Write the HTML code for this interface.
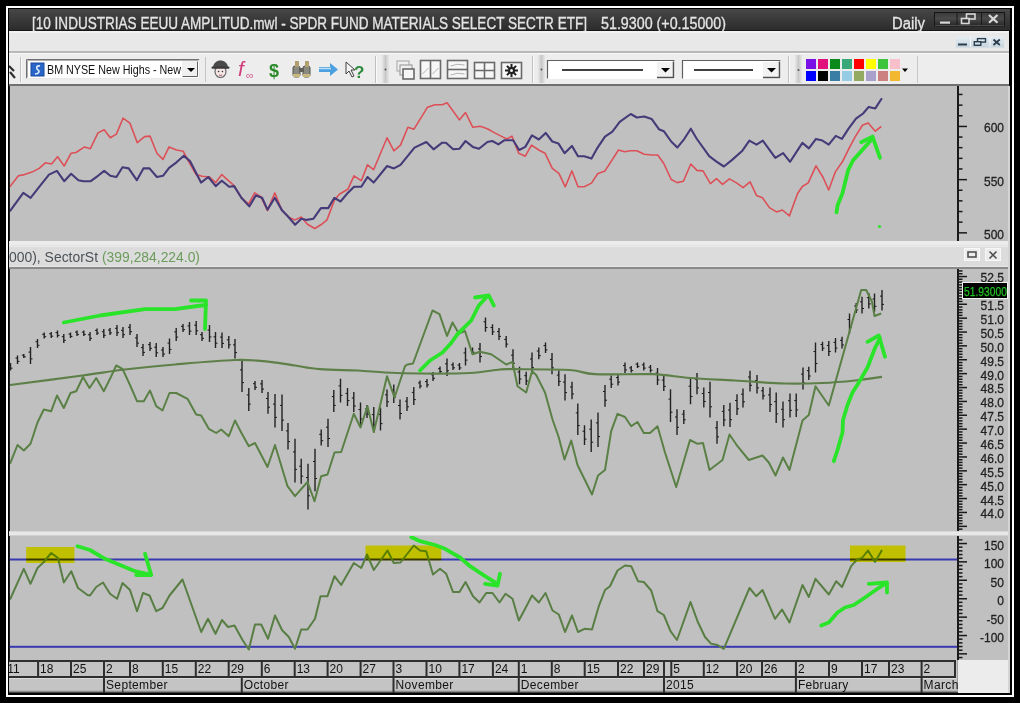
<!DOCTYPE html><html><head><meta charset="utf-8"><style>html,body{margin:0;padding:0;background:#000;width:1020px;height:703px;overflow:hidden}svg{display:block;will-change:transform}text{font-family:"Liberation Sans", sans-serif}</style></head><body>
<svg width="1020" height="703" viewBox="0 0 1020 703">
<defs><linearGradient id="tb" x1="0" y1="0" x2="0" y2="1"><stop offset="0" stop-color="#474747"/><stop offset="1" stop-color="#2c2c2c"/></linearGradient><linearGradient id="wb" x1="0" y1="0" x2="0" y2="1"><stop offset="0" stop-color="#3a3a3a"/><stop offset="0.45" stop-color="#4a4a4a"/><stop offset="1" stop-color="#262626"/></linearGradient><linearGradient id="grip" x1="0" y1="0" x2="1" y2="0"><stop offset="0" stop-color="#f0f0f0"/><stop offset="0.5" stop-color="#c8c8c8"/><stop offset="1" stop-color="#f0f0f0"/></linearGradient><clipPath id="cpd"><rect x="9" y="600" width="1000" height="100"/></clipPath><clipPath id="cp"><rect x="10" y="86" width="947" height="155"/><rect x="10" y="269" width="947" height="262"/><rect x="10" y="536" width="947" height="124"/></clipPath></defs>
<rect x="0" y="0" width="1020" height="703" fill="#000"/>
<rect x="6" y="6" width="1008" height="691" fill="#fff"/>
<rect x="8" y="8" width="1004" height="687" fill="#000"/>
<rect x="9" y="9" width="1001" height="21" fill="url(#tb)"/>
<rect x="9" y="30" width="1001" height="1" fill="#161616"/>
<text x="32" y="28.5" font-size="16" fill="#e4e4e4" stroke="#e4e4e4" stroke-width="0.3" textLength="555" lengthAdjust="spacingAndGlyphs">[10 INDUSTRIAS EEUU AMPLITUD.mwl - SPDR FUND MATERIALS SELECT SECTR ETF]</text>
<text x="601" y="28.5" font-size="16" fill="#e4e4e4" stroke="#e4e4e4" stroke-width="0.3" textLength="125" lengthAdjust="spacingAndGlyphs">51.9300 (+0.15000)</text>
<text x="892" y="29" font-size="16" fill="#e4e4e4" stroke="#e4e4e4" stroke-width="0.3" textLength="33" lengthAdjust="spacingAndGlyphs">Daily</text>
<rect x="934.5" y="12.5" width="70" height="13.5" fill="url(#wb)" stroke="#161616" stroke-width="1"/>
<rect x="935" y="25" width="69" height="1" fill="#4a4a4a"/>
<rect x="956.5" y="13" width="1" height="12" fill="#1a1a1a"/><rect x="981" y="13" width="1" height="12" fill="#1a1a1a"/>
<rect x="940" y="21.5" width="10" height="2.2" fill="#d8d8d8"/>
<rect x="966.5" y="14" width="8.5" height="5" fill="none" stroke="#d8d8d8" stroke-width="1.6"/><rect x="961.5" y="18.5" width="7.5" height="5" fill="#333" stroke="#d8d8d8" stroke-width="1.6"/>
<path d="M989 15 L997.5 22.8 M997.5 15 L989 22.8" stroke="#d8d8d8" stroke-width="2.2"/>
<rect x="9" y="31" width="1000" height="20" fill="#e8e8e8"/>
<rect x="9" y="31" width="1000" height="2" fill="#f2f2f2"/>
<linearGradient id="mdi" x1="0" y1="0" x2="0" y2="1"><stop offset="0" stop-color="#e6eef4"/><stop offset="1" stop-color="#c6d4de"/></linearGradient>
<rect x="956" y="36.5" width="48" height="11" fill="url(#mdi)"/>
<rect x="970" y="37" width="1" height="10" fill="#f4f8fb"/><rect x="989.5" y="37" width="1" height="10" fill="#f4f8fb"/>
<rect x="958" y="43.5" width="9" height="2" fill="#2a3e4e"/>
<rect x="977.5" y="38.6" width="8" height="3.5" fill="none" stroke="#2a3e4e" stroke-width="1.4"/><rect x="974.3" y="41.7" width="6.5" height="3.6" fill="#d2dee6" stroke="#2a3e4e" stroke-width="1.4"/>
<path d="M993.5 39.5 L999.8 45 M999.8 39.5 L993.5 45" stroke="#2a3e4e" stroke-width="1.8"/>
<rect x="9" y="51" width="1000" height="2" fill="#b8b8b8"/>
<rect x="9" y="53" width="1000" height="31" fill="#ededed"/>
<rect x="9" y="53" width="1000" height="1" fill="#f8f8f8"/>
<rect x="9" y="84" width="1000" height="2" fill="#707070"/>
<path d="M9 66 L14 71 M10 72 L15 78" stroke="#303030" stroke-width="2.2" fill="none"/>
<rect x="20" y="57" width="1" height="25" fill="#c0c0c0"/><rect x="21" y="57" width="1" height="25" fill="#fafafa"/>
<rect x="26" y="59" width="174" height="20" fill="#fff"/>
<path d="M26.5 78.5 V59.5 H199.5" stroke="#707070" fill="none"/>
<path d="M27.5 77.5 V60.5 H198.5" stroke="#b0b0b0" fill="none"/>
<path d="M199.5 59.5 V78.5 H26.5" stroke="#e8e8e8" fill="none"/>
<rect x="31" y="63" width="13" height="13" fill="#2a66c8"/><rect x="31" y="63" width="13" height="13" fill="none" stroke="#174a9a" stroke-width="1"/>
<path d="M40 66 C36 65 36 69 38 70 C40 71 39 74 35 74" stroke="#dff0ff" stroke-width="1.6" fill="none"/>
<text x="47" y="74" font-size="12.5" fill="#111" textLength="134" lengthAdjust="spacingAndGlyphs">BM NYSE New Highs - New</text>
<rect x="182" y="61" width="16" height="16" fill="#f0f0f0"/><path d="M182.5 76.5 H197.5 V61.5" stroke="#606060" fill="none"/>
<path d="M187 68 H195 L191 72 Z" fill="#000"/>
<rect x="205" y="57" width="1" height="25" fill="#c4c4c4"/>
<ellipse cx="220.5" cy="71.5" rx="5.5" ry="6" fill="#f4e4e4" stroke="#6a6a6a" stroke-width="1.2"/>
<path d="M213 68 C213 58 228 58 228 68 Z" fill="#4a4a4a"/><rect x="211.5" y="66.5" width="18" height="2.2" rx="1" fill="#3a3a3a"/>
<circle cx="218.6" cy="71.5" r="0.8" fill="#333"/><circle cx="222.4" cy="71.5" r="0.8" fill="#333"/><path d="M219 75 Q220.5 76 222 75" stroke="#904848" fill="none" stroke-width="0.9"/>
<text x="238" y="76" font-size="21" font-style="italic" font-family="Liberation Serif, serif" fill="#d03c7c">f</text>
<text x="246" y="79" font-size="11" fill="#d86090">&#8734;</text>
<text x="269" y="77" font-size="18" font-weight="bold" fill="#2a8a2a">$</text>
<rect x="293" y="66" width="7" height="11" rx="2" fill="#8a8a80" stroke="#505048" stroke-width="1"/><rect x="303" y="66" width="7" height="11" rx="2" fill="#8a8a80" stroke="#505048" stroke-width="1"/><rect x="295" y="61" width="4" height="6" fill="#b0a070"/><rect x="305" y="61" width="4" height="6" fill="#b0a070"/><rect x="299" y="68" width="5" height="4" fill="#606058"/><rect x="293" y="74" width="7" height="3" fill="#c8b880"/><rect x="303" y="74" width="7" height="3" fill="#c8b880"/>
<path d="M319 67 H330 V63 L338 69.5 L330 76 V72 H319 Z" fill="#4aa0e0"/><path d="M319 68.5 H331" stroke="#bfe0f8" stroke-width="1.5"/>
<path d="M346 62 L346 74 L349 71 L352 77 L354 76 L351 70 L355 70 Z" fill="#f4f4f4" stroke="#404040" stroke-width="1"/>
<text x="354" y="78" font-size="17" font-weight="bold" fill="#2a8a3a">?</text>
<rect x="375" y="56" width="1" height="27" fill="#c0c0c0"/><rect x="376" y="56" width="1" height="27" fill="#fafafa"/>
<rect x="381" y="55" width="9" height="28" fill="url(#grip)"/><circle cx="385.5" cy="69.5" r="1" fill="#505050"/>
<rect x="397" y="61" width="12" height="10" fill="#f0f0f0" stroke="#b0b0b0" stroke-width="1.2"/><rect x="400" y="65" width="12" height="10" fill="#f0f0f0" stroke="#a0a0a0" stroke-width="1.2"/><rect x="403" y="69" width="11" height="10" fill="#f6f6f6" stroke="#6a6a6a" stroke-width="1.6"/>
<rect x="420.5" y="60.5" width="20" height="18" fill="#f6f6f6" stroke="#6a6a6a" stroke-width="1.6"/><path d="M430.5 60.5 V78.5" stroke="#6a6a6a" stroke-width="1.6"/><path d="M422.5 74 L428.5 68 M432.5 74 L438.5 68" stroke="#a0a0a0" stroke-width="0.8"/>
<rect x="447.5" y="60.5" width="20" height="18" fill="#f6f6f6" stroke="#6a6a6a" stroke-width="1.6"/><path d="M447.5 69.5 H467.5" stroke="#6a6a6a" stroke-width="1.6"/><path d="M450.5 66 Q457.5 63 464.5 65 M450.5 75 Q457.5 72 464.5 74" stroke="#a0a0a0" stroke-width="0.8" fill="none"/>
<rect x="474.5" y="62.5" width="20" height="16" fill="#f6f6f6" stroke="#6a6a6a" stroke-width="1.6"/><path d="M484.5 62.5 V78.5 M474.5 70.5 H494.5" stroke="#6a6a6a" stroke-width="1.6"/>
<rect x="501.5" y="62.5" width="20" height="16" fill="#f6f6f6" stroke="#6a6a6a" stroke-width="1.6"/>
<g transform="translate(511.5,70.5)"><circle r="3.5" fill="#202020"/><rect x="-1" y="-6.5" width="2" height="4" fill="#202020" transform="rotate(0)"/><rect x="-1" y="-6.5" width="2" height="4" fill="#202020" transform="rotate(45)"/><rect x="-1" y="-6.5" width="2" height="4" fill="#202020" transform="rotate(90)"/><rect x="-1" y="-6.5" width="2" height="4" fill="#202020" transform="rotate(135)"/><rect x="-1" y="-6.5" width="2" height="4" fill="#202020" transform="rotate(180)"/><rect x="-1" y="-6.5" width="2" height="4" fill="#202020" transform="rotate(225)"/><rect x="-1" y="-6.5" width="2" height="4" fill="#202020" transform="rotate(270)"/><rect x="-1" y="-6.5" width="2" height="4" fill="#202020" transform="rotate(315)"/><circle r="1.5" fill="#f0f0f0"/></g>
<rect x="532" y="56" width="1" height="27" fill="#c0c0c0"/><rect x="533" y="56" width="1" height="27" fill="#fafafa"/>
<rect x="537" y="55" width="9" height="28" fill="url(#grip)"/><circle cx="541.5" cy="69.5" r="1" fill="#505050"/>
<rect x="547" y="60" width="128" height="19" fill="#fff"/><path d="M547.5 78.5 V60.5 H674.5" stroke="#606060" fill="none" stroke-width="1.2"/><rect x="657" y="62" width="17" height="15" fill="#f2f2f2"/><path d="M657.0 77.5 H673.5 V61.5" stroke="#505050" fill="none" stroke-width="1.5"/><path d="M661.0 68 H670.0 L665.5 72.5 Z" fill="#000"/><rect x="562" y="69" width="81" height="2" fill="#404040"/>
<rect x="682" y="60" width="99" height="19" fill="#fff"/><path d="M682.5 78.5 V60.5 H780.5" stroke="#606060" fill="none" stroke-width="1.2"/><rect x="763" y="62" width="17" height="15" fill="#f2f2f2"/><path d="M763.0 77.5 H779.5 V61.5" stroke="#505050" fill="none" stroke-width="1.5"/><path d="M767.0 68 H776.0 L771.5 72.5 Z" fill="#000"/><rect x="694" y="69" width="59" height="2" fill="#404040"/>
<rect x="788" y="56" width="1" height="27" fill="#c0c0c0"/><rect x="789" y="56" width="1" height="27" fill="#fafafa"/>
<rect x="794" y="55" width="9" height="28" fill="url(#grip)"/><circle cx="798.5" cy="70" r="1" fill="#505050"/>
<rect x="806" y="59" width="10" height="10" fill="#7a10e8"/>
<rect x="806" y="71" width="10" height="10" fill="#0000ff"/>
<rect x="818" y="59" width="10" height="10" fill="#e0107c"/>
<rect x="818" y="71" width="10" height="10" fill="#000000"/>
<rect x="830" y="59" width="10" height="10" fill="#0a8a1a"/>
<rect x="830" y="71" width="10" height="10" fill="#3a7ea6"/>
<rect x="842" y="59" width="10" height="10" fill="#38a878"/>
<rect x="842" y="71" width="10" height="10" fill="#96cce4"/>
<rect x="854" y="59" width="10" height="10" fill="#ff0000"/>
<rect x="854" y="71" width="10" height="10" fill="#92aa62"/>
<rect x="866" y="59" width="10" height="10" fill="#ffff00"/>
<rect x="866" y="71" width="10" height="10" fill="#aaa0cc"/>
<rect x="878" y="59" width="10" height="10" fill="#3cc43c"/>
<rect x="878" y="71" width="10" height="10" fill="#cc8080"/>
<rect x="890" y="59" width="10" height="10" fill="#f6bfca"/>
<rect x="890" y="71" width="10" height="10" fill="#f2b830"/>
<path d="M902 68.5 H908 L905 72 Z" fill="#000"/>
<rect x="917" y="56" width="1" height="27" fill="#c8c8c8"/>
<rect x="9" y="86" width="1000" height="607" fill="#c0c0c0"/>
<rect x="8" y="86" width="2" height="607" fill="#1e1e1e"/>
<rect x="1008" y="86" width="2" height="607" fill="#d4d4d4"/>
<rect x="9" y="241" width="999" height="26" fill="#dcdcdc"/>
<rect x="9" y="241" width="999" height="4" fill="#ececec"/><rect x="9" y="245" width="999" height="1" fill="#e2e2e2"/><rect x="9" y="246" width="999" height="1" fill="#eaeaea"/>
<rect x="9" y="266" width="999" height="1" fill="#e6e6e6"/><rect x="9" y="267" width="999" height="2" fill="#8a8a8a"/>
<text x="9" y="262" font-size="14.5" fill="#4c5258" textLength="89" lengthAdjust="spacingAndGlyphs">000), SectorSt</text>
<text x="102" y="262" font-size="14.5" fill="#6c9c5c" textLength="98" lengthAdjust="spacingAndGlyphs">(399,284,224.0)</text>
<rect x="964.5" y="248.5" width="15" height="12" fill="#ececec" stroke="#f8f8f8" stroke-width="1"/><rect x="968" y="252" width="8" height="5" fill="none" stroke="#505050" stroke-width="1.6"/>
<rect x="985.5" y="248.5" width="15" height="12" fill="#ececec" stroke="#f8f8f8" stroke-width="1"/><path d="M989.5 251.5 L996.5 258.5 M996.5 251.5 L989.5 258.5" stroke="#505050" stroke-width="1.6"/>
<rect x="9" y="531" width="999" height="1" fill="#d8d8d8"/><rect x="9" y="532" width="999" height="3" fill="#e8e8e8"/><rect x="9" y="535" width="999" height="1" fill="#d0d0d0"/>
<rect x="957" y="86" width="2" height="155" fill="#1a1a1a"/><rect x="959" y="93.7" width="3.5" height="1.5" fill="#1a1a1a"/><rect x="959" y="104.4" width="3.5" height="1.5" fill="#1a1a1a"/><rect x="959" y="115.0" width="3.5" height="1.5" fill="#1a1a1a"/><rect x="959" y="125.7" width="8.0" height="1.5" fill="#1a1a1a"/><rect x="959" y="136.3" width="3.5" height="1.5" fill="#1a1a1a"/><rect x="959" y="146.9" width="3.5" height="1.5" fill="#1a1a1a"/><rect x="959" y="157.6" width="3.5" height="1.5" fill="#1a1a1a"/><rect x="959" y="168.2" width="3.5" height="1.5" fill="#1a1a1a"/><rect x="959" y="178.9" width="8.0" height="1.5" fill="#1a1a1a"/><rect x="959" y="189.5" width="3.5" height="1.5" fill="#1a1a1a"/><rect x="959" y="200.1" width="3.5" height="1.5" fill="#1a1a1a"/><rect x="959" y="210.8" width="3.5" height="1.5" fill="#1a1a1a"/><rect x="959" y="221.4" width="3.5" height="1.5" fill="#1a1a1a"/><rect x="959" y="232.1" width="8.0" height="1.5" fill="#1a1a1a"/><text x="984.0" y="132.4" font-size="13.5" fill="#222" stroke="#222" stroke-width="0.3" textLength="20.0" lengthAdjust="spacingAndGlyphs">600</text><text x="984.0" y="185.7" font-size="13.5" fill="#222" stroke="#222" stroke-width="0.3" textLength="20.0" lengthAdjust="spacingAndGlyphs">550</text><text x="984.0" y="238.9" font-size="13.5" fill="#222" stroke="#222" stroke-width="0.3" textLength="20.0" lengthAdjust="spacingAndGlyphs">500</text>
<rect x="957" y="269" width="2" height="262" fill="#1a1a1a"/><rect x="959" y="270.2" width="3.5" height="1.5" fill="#1a1a1a"/><rect x="959" y="273.0" width="3.5" height="1.5" fill="#1a1a1a"/><rect x="959" y="275.8" width="8.0" height="1.5" fill="#1a1a1a"/><rect x="959" y="278.5" width="3.5" height="1.5" fill="#1a1a1a"/><rect x="959" y="281.3" width="3.5" height="1.5" fill="#1a1a1a"/><rect x="959" y="284.1" width="3.5" height="1.5" fill="#1a1a1a"/><rect x="959" y="286.9" width="3.5" height="1.5" fill="#1a1a1a"/><rect x="959" y="289.6" width="8.0" height="1.5" fill="#1a1a1a"/><rect x="959" y="292.4" width="3.5" height="1.5" fill="#1a1a1a"/><rect x="959" y="295.2" width="3.5" height="1.5" fill="#1a1a1a"/><rect x="959" y="298.0" width="3.5" height="1.5" fill="#1a1a1a"/><rect x="959" y="300.7" width="3.5" height="1.5" fill="#1a1a1a"/><rect x="959" y="303.5" width="8.0" height="1.5" fill="#1a1a1a"/><rect x="959" y="306.3" width="3.5" height="1.5" fill="#1a1a1a"/><rect x="959" y="309.1" width="3.5" height="1.5" fill="#1a1a1a"/><rect x="959" y="311.8" width="3.5" height="1.5" fill="#1a1a1a"/><rect x="959" y="314.6" width="3.5" height="1.5" fill="#1a1a1a"/><rect x="959" y="317.4" width="8.0" height="1.5" fill="#1a1a1a"/><rect x="959" y="320.2" width="3.5" height="1.5" fill="#1a1a1a"/><rect x="959" y="322.9" width="3.5" height="1.5" fill="#1a1a1a"/><rect x="959" y="325.7" width="3.5" height="1.5" fill="#1a1a1a"/><rect x="959" y="328.5" width="3.5" height="1.5" fill="#1a1a1a"/><rect x="959" y="331.3" width="8.0" height="1.5" fill="#1a1a1a"/><rect x="959" y="334.0" width="3.5" height="1.5" fill="#1a1a1a"/><rect x="959" y="336.8" width="3.5" height="1.5" fill="#1a1a1a"/><rect x="959" y="339.6" width="3.5" height="1.5" fill="#1a1a1a"/><rect x="959" y="342.4" width="3.5" height="1.5" fill="#1a1a1a"/><rect x="959" y="345.1" width="8.0" height="1.5" fill="#1a1a1a"/><rect x="959" y="347.9" width="3.5" height="1.5" fill="#1a1a1a"/><rect x="959" y="350.7" width="3.5" height="1.5" fill="#1a1a1a"/><rect x="959" y="353.5" width="3.5" height="1.5" fill="#1a1a1a"/><rect x="959" y="356.3" width="3.5" height="1.5" fill="#1a1a1a"/><rect x="959" y="359.0" width="8.0" height="1.5" fill="#1a1a1a"/><rect x="959" y="361.8" width="3.5" height="1.5" fill="#1a1a1a"/><rect x="959" y="364.6" width="3.5" height="1.5" fill="#1a1a1a"/><rect x="959" y="367.4" width="3.5" height="1.5" fill="#1a1a1a"/><rect x="959" y="370.1" width="3.5" height="1.5" fill="#1a1a1a"/><rect x="959" y="372.9" width="8.0" height="1.5" fill="#1a1a1a"/><rect x="959" y="375.7" width="3.5" height="1.5" fill="#1a1a1a"/><rect x="959" y="378.5" width="3.5" height="1.5" fill="#1a1a1a"/><rect x="959" y="381.2" width="3.5" height="1.5" fill="#1a1a1a"/><rect x="959" y="384.0" width="3.5" height="1.5" fill="#1a1a1a"/><rect x="959" y="386.8" width="8.0" height="1.5" fill="#1a1a1a"/><rect x="959" y="389.6" width="3.5" height="1.5" fill="#1a1a1a"/><rect x="959" y="392.3" width="3.5" height="1.5" fill="#1a1a1a"/><rect x="959" y="395.1" width="3.5" height="1.5" fill="#1a1a1a"/><rect x="959" y="397.9" width="3.5" height="1.5" fill="#1a1a1a"/><rect x="959" y="400.7" width="8.0" height="1.5" fill="#1a1a1a"/><rect x="959" y="403.4" width="3.5" height="1.5" fill="#1a1a1a"/><rect x="959" y="406.2" width="3.5" height="1.5" fill="#1a1a1a"/><rect x="959" y="409.0" width="3.5" height="1.5" fill="#1a1a1a"/><rect x="959" y="411.8" width="3.5" height="1.5" fill="#1a1a1a"/><rect x="959" y="414.5" width="8.0" height="1.5" fill="#1a1a1a"/><rect x="959" y="417.3" width="3.5" height="1.5" fill="#1a1a1a"/><rect x="959" y="420.1" width="3.5" height="1.5" fill="#1a1a1a"/><rect x="959" y="422.9" width="3.5" height="1.5" fill="#1a1a1a"/><rect x="959" y="425.7" width="3.5" height="1.5" fill="#1a1a1a"/><rect x="959" y="428.4" width="8.0" height="1.5" fill="#1a1a1a"/><rect x="959" y="431.2" width="3.5" height="1.5" fill="#1a1a1a"/><rect x="959" y="434.0" width="3.5" height="1.5" fill="#1a1a1a"/><rect x="959" y="436.8" width="3.5" height="1.5" fill="#1a1a1a"/><rect x="959" y="439.5" width="3.5" height="1.5" fill="#1a1a1a"/><rect x="959" y="442.3" width="8.0" height="1.5" fill="#1a1a1a"/><rect x="959" y="445.1" width="3.5" height="1.5" fill="#1a1a1a"/><rect x="959" y="447.9" width="3.5" height="1.5" fill="#1a1a1a"/><rect x="959" y="450.6" width="3.5" height="1.5" fill="#1a1a1a"/><rect x="959" y="453.4" width="3.5" height="1.5" fill="#1a1a1a"/><rect x="959" y="456.2" width="8.0" height="1.5" fill="#1a1a1a"/><rect x="959" y="459.0" width="3.5" height="1.5" fill="#1a1a1a"/><rect x="959" y="461.7" width="3.5" height="1.5" fill="#1a1a1a"/><rect x="959" y="464.5" width="3.5" height="1.5" fill="#1a1a1a"/><rect x="959" y="467.3" width="3.5" height="1.5" fill="#1a1a1a"/><rect x="959" y="470.1" width="8.0" height="1.5" fill="#1a1a1a"/><rect x="959" y="472.8" width="3.5" height="1.5" fill="#1a1a1a"/><rect x="959" y="475.6" width="3.5" height="1.5" fill="#1a1a1a"/><rect x="959" y="478.4" width="3.5" height="1.5" fill="#1a1a1a"/><rect x="959" y="481.2" width="3.5" height="1.5" fill="#1a1a1a"/><rect x="959" y="483.9" width="8.0" height="1.5" fill="#1a1a1a"/><rect x="959" y="486.7" width="3.5" height="1.5" fill="#1a1a1a"/><rect x="959" y="489.5" width="3.5" height="1.5" fill="#1a1a1a"/><rect x="959" y="492.3" width="3.5" height="1.5" fill="#1a1a1a"/><rect x="959" y="495.1" width="3.5" height="1.5" fill="#1a1a1a"/><rect x="959" y="497.8" width="8.0" height="1.5" fill="#1a1a1a"/><rect x="959" y="500.6" width="3.5" height="1.5" fill="#1a1a1a"/><rect x="959" y="503.4" width="3.5" height="1.5" fill="#1a1a1a"/><rect x="959" y="506.2" width="3.5" height="1.5" fill="#1a1a1a"/><rect x="959" y="508.9" width="3.5" height="1.5" fill="#1a1a1a"/><rect x="959" y="511.7" width="8.0" height="1.5" fill="#1a1a1a"/><rect x="959" y="514.5" width="3.5" height="1.5" fill="#1a1a1a"/><rect x="959" y="517.3" width="3.5" height="1.5" fill="#1a1a1a"/><rect x="959" y="520.0" width="3.5" height="1.5" fill="#1a1a1a"/><rect x="959" y="522.8" width="3.5" height="1.5" fill="#1a1a1a"/><rect x="959" y="525.6" width="8.0" height="1.5" fill="#1a1a1a"/><rect x="959" y="528.4" width="3.5" height="1.5" fill="#1a1a1a"/><text x="980.6" y="282.4" font-size="13.5" fill="#222" stroke="#222" stroke-width="0.3" textLength="23.4" lengthAdjust="spacingAndGlyphs">52.5</text><text x="980.6" y="296.3" font-size="13.5" fill="#222" stroke="#222" stroke-width="0.3" textLength="23.4" lengthAdjust="spacingAndGlyphs">52.0</text><text x="980.6" y="310.2" font-size="13.5" fill="#222" stroke="#222" stroke-width="0.3" textLength="23.4" lengthAdjust="spacingAndGlyphs">51.5</text><text x="980.6" y="324.0" font-size="13.5" fill="#222" stroke="#222" stroke-width="0.3" textLength="23.4" lengthAdjust="spacingAndGlyphs">51.0</text><text x="980.6" y="337.9" font-size="13.5" fill="#222" stroke="#222" stroke-width="0.3" textLength="23.4" lengthAdjust="spacingAndGlyphs">50.5</text><text x="980.6" y="351.8" font-size="13.5" fill="#222" stroke="#222" stroke-width="0.3" textLength="23.4" lengthAdjust="spacingAndGlyphs">50.0</text><text x="980.6" y="365.7" font-size="13.5" fill="#222" stroke="#222" stroke-width="0.3" textLength="23.4" lengthAdjust="spacingAndGlyphs">49.5</text><text x="980.6" y="379.6" font-size="13.5" fill="#222" stroke="#222" stroke-width="0.3" textLength="23.4" lengthAdjust="spacingAndGlyphs">49.0</text><text x="980.6" y="393.4" font-size="13.5" fill="#222" stroke="#222" stroke-width="0.3" textLength="23.4" lengthAdjust="spacingAndGlyphs">48.5</text><text x="980.6" y="407.3" font-size="13.5" fill="#222" stroke="#222" stroke-width="0.3" textLength="23.4" lengthAdjust="spacingAndGlyphs">48.0</text><text x="980.6" y="421.2" font-size="13.5" fill="#222" stroke="#222" stroke-width="0.3" textLength="23.4" lengthAdjust="spacingAndGlyphs">47.5</text><text x="980.6" y="435.1" font-size="13.5" fill="#222" stroke="#222" stroke-width="0.3" textLength="23.4" lengthAdjust="spacingAndGlyphs">47.0</text><text x="980.6" y="449.0" font-size="13.5" fill="#222" stroke="#222" stroke-width="0.3" textLength="23.4" lengthAdjust="spacingAndGlyphs">46.5</text><text x="980.6" y="462.8" font-size="13.5" fill="#222" stroke="#222" stroke-width="0.3" textLength="23.4" lengthAdjust="spacingAndGlyphs">46.0</text><text x="980.6" y="476.7" font-size="13.5" fill="#222" stroke="#222" stroke-width="0.3" textLength="23.4" lengthAdjust="spacingAndGlyphs">45.5</text><text x="980.6" y="490.6" font-size="13.5" fill="#222" stroke="#222" stroke-width="0.3" textLength="23.4" lengthAdjust="spacingAndGlyphs">45.0</text><text x="980.6" y="504.5" font-size="13.5" fill="#222" stroke="#222" stroke-width="0.3" textLength="23.4" lengthAdjust="spacingAndGlyphs">44.5</text><text x="980.6" y="518.4" font-size="13.5" fill="#222" stroke="#222" stroke-width="0.3" textLength="23.4" lengthAdjust="spacingAndGlyphs">44.0</text>
<rect x="957" y="536" width="2" height="124" fill="#1a1a1a"/><rect x="959" y="539.1" width="3.5" height="1.5" fill="#1a1a1a"/><rect x="959" y="542.8" width="8.0" height="1.5" fill="#1a1a1a"/><rect x="959" y="546.4" width="3.5" height="1.5" fill="#1a1a1a"/><rect x="959" y="550.1" width="3.5" height="1.5" fill="#1a1a1a"/><rect x="959" y="553.8" width="3.5" height="1.5" fill="#1a1a1a"/><rect x="959" y="557.5" width="3.5" height="1.5" fill="#1a1a1a"/><rect x="959" y="561.1" width="8.0" height="1.5" fill="#1a1a1a"/><rect x="959" y="564.8" width="3.5" height="1.5" fill="#1a1a1a"/><rect x="959" y="568.5" width="3.5" height="1.5" fill="#1a1a1a"/><rect x="959" y="572.2" width="3.5" height="1.5" fill="#1a1a1a"/><rect x="959" y="575.9" width="3.5" height="1.5" fill="#1a1a1a"/><rect x="959" y="579.5" width="8.0" height="1.5" fill="#1a1a1a"/><rect x="959" y="583.2" width="3.5" height="1.5" fill="#1a1a1a"/><rect x="959" y="586.9" width="3.5" height="1.5" fill="#1a1a1a"/><rect x="959" y="590.6" width="3.5" height="1.5" fill="#1a1a1a"/><rect x="959" y="594.3" width="3.5" height="1.5" fill="#1a1a1a"/><rect x="959" y="598.0" width="8.0" height="1.5" fill="#1a1a1a"/><rect x="959" y="601.6" width="3.5" height="1.5" fill="#1a1a1a"/><rect x="959" y="605.3" width="3.5" height="1.5" fill="#1a1a1a"/><rect x="959" y="609.0" width="3.5" height="1.5" fill="#1a1a1a"/><rect x="959" y="612.7" width="3.5" height="1.5" fill="#1a1a1a"/><rect x="959" y="616.4" width="8.0" height="1.5" fill="#1a1a1a"/><rect x="959" y="620.0" width="3.5" height="1.5" fill="#1a1a1a"/><rect x="959" y="623.7" width="3.5" height="1.5" fill="#1a1a1a"/><rect x="959" y="627.4" width="3.5" height="1.5" fill="#1a1a1a"/><rect x="959" y="631.1" width="3.5" height="1.5" fill="#1a1a1a"/><rect x="959" y="634.8" width="8.0" height="1.5" fill="#1a1a1a"/><rect x="959" y="638.4" width="3.5" height="1.5" fill="#1a1a1a"/><rect x="959" y="642.1" width="3.5" height="1.5" fill="#1a1a1a"/><rect x="959" y="645.8" width="3.5" height="1.5" fill="#1a1a1a"/><rect x="959" y="649.5" width="3.5" height="1.5" fill="#1a1a1a"/><rect x="959" y="653.1" width="8.0" height="1.5" fill="#1a1a1a"/><rect x="959" y="656.8" width="3.5" height="1.5" fill="#1a1a1a"/><text x="984.0" y="550.2" font-size="13.5" fill="#222" stroke="#222" stroke-width="0.3" textLength="20.0" lengthAdjust="spacingAndGlyphs">150</text><text x="984.0" y="568.1" font-size="13.5" fill="#222" stroke="#222" stroke-width="0.3" textLength="20.0" lengthAdjust="spacingAndGlyphs">100</text><text x="990.6" y="587.1" font-size="13.5" fill="#222" stroke="#222" stroke-width="0.3" textLength="13.4" lengthAdjust="spacingAndGlyphs">50</text><text x="997.3" y="605.1" font-size="13.5" fill="#222" stroke="#222" stroke-width="0.3" textLength="6.7" lengthAdjust="spacingAndGlyphs">0</text><text x="986.6" y="623.7" font-size="13.5" fill="#222" stroke="#222" stroke-width="0.3" textLength="17.4" lengthAdjust="spacingAndGlyphs">-50</text><text x="980.0" y="642.2" font-size="13.5" fill="#222" stroke="#222" stroke-width="0.3" textLength="24.0" lengthAdjust="spacingAndGlyphs">-100</text>
<rect x="962.5" y="282.5" width="45" height="16" fill="#000" stroke="#f0f0f0" stroke-width="1"/>
<text x="964" y="295.5" font-size="12.5" fill="#22c022" stroke="#22c022" stroke-width="0.25" textLength="43" lengthAdjust="spacingAndGlyphs">51.93000</text>
<g clip-path="url(#cp)"><rect x="9" y="86" width="950" height="574" fill="#c0c0c0"/>
<rect x="10" y="558.5" width="948" height="2" fill="#3838b0"/>
<rect x="10" y="645.8" width="948" height="2" fill="#3838b0"/>
<polyline points="9.8,186.8 18.4,175.8 24.5,174.6 31.9,172.1 39.2,168.4 45.3,162.8 51.5,164.0 57.6,156.7 64.2,166.0 71.1,153.2 76.0,152.5 84.6,146.9 90.2,148.8 98.0,132.9 104.2,129.7 110.3,137.8 116.4,134.1 123.0,118.2 129.9,123.1 137.3,142.7 144.6,136.6 150.0,136.1 156.9,153.2 163.0,159.4 169.1,146.9 176.5,150.0 183.3,151.3 188.7,161.6 196.1,174.6 202.2,176.3 209.6,177.0 215.7,182.6 221.8,174.6 227.9,180.2 234.1,185.6 241.4,197.8 248.6,204.0 254.7,192.9 260.8,196.6 267.5,210.6 274.8,192.9 281.7,210.1 289.0,217.5 295.1,219.9 301.3,217.0 307.4,224.3 314.8,228.5 320.9,224.8 327.0,219.9 334.4,200.3 339.3,194.2 347.8,189.3 354.0,175.8 361.3,180.7 367.5,164.8 373.6,169.7 387.1,137.8 393.9,150.8 400.5,145.1 407.9,127.3 414.0,129.2 427.5,107.2 434.9,104.7 442.2,104.7 447.1,102.7 459.4,119.9 465.5,112.5 472.8,127.3 480.2,126.3 487.4,128.7 494.7,132.9 502.1,136.6 507.0,139.0 511.9,136.1 518.7,153.2 525.3,156.2 531.5,145.1 538.8,150.0 545.0,153.2 552.3,168.4 558.9,173.3 565.3,186.8 571.9,170.9 578.0,186.8 584.2,186.8 591.5,183.1 597.6,173.8 605.0,170.9 618.5,150.0 624.6,151.8 630.7,150.8 636.9,150.8 644.2,154.2 651.6,155.0 657.7,155.0 663.8,163.5 671.2,179.5 677.3,182.6 683.4,181.2 690.8,164.0 696.9,170.4 703.0,170.9 710.4,183.6 716.5,178.7 722.6,184.4 729.4,178.9 736.5,182.9 743.1,187.6 750.1,181.8 756.5,195.4 762.4,197.8 769.4,207.6 776.5,211.9 782.4,210.0 789.4,215.9 797.6,193.5 802.4,186.5 808.2,182.9 816.0,165.8 823.1,177.5 828.7,190.0 835.3,171.9 842.4,161.8 849.4,147.6 855.3,136.6 862.4,125.3 868.2,122.9 875.3,131.2 881.2,126.5" fill="none" stroke="#dc5058" stroke-width="1.6" stroke-linejoin="round"/>
<polyline points="9.8,211.3 23.3,192.9 30.6,197.8 39.2,186.8 49.0,174.6 56.9,170.9 64.2,181.2 71.1,173.8 78.4,180.2 83.3,181.2 90.7,181.2 98.0,175.8 104.2,170.9 110.3,175.8 116.4,177.0 122.5,167.2 128.7,168.4 136.8,180.2 143.4,168.4 149.5,168.4 156.9,177.0 163.0,175.8 169.1,167.9 176.5,162.3 183.8,155.7 190.0,161.1 201.0,182.6 208.3,177.0 215.7,186.1 221.8,180.7 229.2,186.8 234.1,186.1 241.4,197.8 249.3,206.4 255.9,195.4 262.1,197.8 267.5,209.6 274.8,197.8 282.2,210.6 287.8,216.2 295.1,224.8 301.3,218.7 306.7,219.9 313.5,218.7 320.9,208.1 328.2,208.1 334.4,197.8 340.5,201.5 347.8,192.9 354.0,186.8 361.3,186.8 367.5,177.0 373.6,182.6 387.1,166.0 393.9,168.4 400.5,164.8 414.5,147.6 426.3,142.0 433.6,149.3 442.2,142.7 445.9,142.7 453.2,149.3 459.4,148.8 465.5,141.0 472.8,146.9 479.0,148.8 487.4,142.0 492.3,141.0 498.4,144.4 504.5,140.2 513.1,140.2 519.2,150.0 525.3,146.9 532.0,135.3 538.8,139.5 545.7,132.9 552.3,141.5 558.4,143.4 564.6,153.2 571.9,145.9 578.0,156.2 584.2,156.2 591.5,158.6 597.6,147.6 605.0,136.6 612.4,131.7 619.7,121.9 630.7,114.0 636.9,117.5 644.2,116.5 651.6,118.9 658.9,129.2 663.8,131.2 671.2,141.5 677.3,147.6 683.4,140.2 690.8,128.7 696.9,139.0 709.2,156.2 716.5,161.6 723.9,166.5 731.8,160.1 742.4,150.7 749.4,140.6 756.5,144.6 762.8,140.6 775.3,157.8 783.1,153.1 790.1,161.8 802.4,142.9 808.9,148.4 816.0,138.9 822.4,140.6 828.7,144.6 835.8,135.9 841.9,138.9 848.9,128.1 856.0,118.7 863.1,113.5 868.7,106.9 875.3,108.4 881.9,98.2" fill="none" stroke="#463a78" stroke-width="2.1" stroke-linejoin="round"/>
<path d="M10.5 363.0 V370.5 M17.5 355.5 V364.0 M23.8 354.0 V358.0 M30.5 347.0 V364.0 M37.5 339.0 V348.0 M44.2 332.5 V338.5 M51.2 332.0 V338.0 M57.5 330.5 V337.5 M63.8 334.0 V343.0 M70.5 332.5 V338.0 M77.0 330.5 V336.0 M83.8 330.5 V336.0 M90.0 332.0 V341.0 M97.0 328.5 V335.0 M103.8 329.0 V338.0 M110.0 328.0 V335.0 M117.0 325.0 V336.0 M123.0 327.0 V338.0 M130.0 324.0 V335.0 M137.0 334.0 V347.0 M143.0 344.0 V356.0 M150.0 342.0 V351.0 M156.2 343.0 V357.0 M163.0 347.0 V357.0 M169.5 338.5 V354.0 M176.2 328.0 V341.0 M183.0 324.0 V332.0 M189.5 322.0 V335.0 M196.2 321.0 V335.0 M202.0 332.0 V341.0 M209.5 325.0 V342.0 M215.5 332.0 V348.0 M222.0 332.5 V348.0 M228.8 336.0 V348.5 M235.0 339.0 V358.5 M242.0 360.5 V392.0 M248.8 388.0 V411.0 M255.0 381.0 V390.0 M262.0 380.0 V393.0 M268.0 392.0 V413.8 M275.0 394.0 V427.5 M282.0 394.5 V431.0 M288.0 423.0 V449.5 M295.0 438.8 V482.5 M301.2 458.8 V483.8 M308.0 463.8 V509.5 M315.0 448.8 V491.2 M321.2 429.5 V445.5 M328.0 418.8 V447.0 M333.8 390.0 V412.0 M340.5 378.8 V402.5 M347.5 388.0 V406.0 M353.8 392.0 V412.0 M360.5 402.5 V426.0 M367.0 405.0 V418.0 M373.8 407.0 V432.5 M380.5 407.5 V430.5 M387.0 389.5 V407.0 M393.8 384.5 V403.0 M400.0 399.5 V419.5 M407.0 397.0 V411.0 M413.8 387.0 V405.0 M420.0 380.5 V388.5 M427.0 379.0 V387.5 M433.0 372.0 V381.0 M440.0 366.5 V373.8 M447.0 358.5 V376.0 M453.0 362.5 V370.0 M459.5 363.0 V370.0 M465.5 347.5 V365.5 M472.5 347.5 V354.2 M480.0 343.0 V362.5 M485.5 317.5 V331.8 M492.5 324.2 V335.0 M499.0 328.0 V340.0 M506.2 336.0 V347.5 M513.0 349.2 V369.2 M519.5 366.8 V384.2 M526.2 371.8 V385.0 M532.0 352.5 V374.2 M538.8 347.5 V359.2 M545.5 342.5 V353.0 M552.0 353.0 V374.2 M558.8 370.5 V386.0 M565.0 374.2 V400.5 M572.0 381.8 V399.2 M577.8 403.5 V435.0 M584.5 425.2 V445.0 M591.2 419.5 V452.0 M598.0 412.5 V447.0 M605.0 385.0 V406.8 M611.2 375.5 V388.0 M618.0 374.2 V385.5 M625.0 362.5 V373.0 M631.2 366.0 V372.5 M637.5 362.5 V368.0 M643.8 362.5 V370.5 M650.5 365.0 V372.5 M657.5 368.0 V385.0 M663.8 375.5 V391.0 M670.5 389.2 V422.0 M677.0 409.2 V435.0 M683.8 410.0 V424.0 M690.5 378.5 V404.2 M697.0 373.0 V394.2 M703.8 387.5 V407.5 M710.0 381.8 V417.5 M717.0 421.0 V443.8 M723.8 405.0 V426.2 M730.0 402.8 V427.0 M737.0 394.2 V415.0 M743.0 388.5 V407.5 M750.0 370.8 V391.5 M757.0 375.0 V393.5 M763.0 387.0 V399.5 M770.0 387.5 V412.0 M776.2 392.5 V423.0 M783.0 401.5 V427.5 M790.0 393.5 V417.5 M796.2 393.5 V417.0 M803.0 367.5 V389.5 M808.8 366.8 V380.0 M815.5 342.5 V372.5 M822.5 341.8 V351.0 M828.8 341.0 V356.0 M835.5 338.0 V352.5 M842.0 336.8 V348.5 M849.5 313.5 V333.5 M856.2 303.0 V313.0 M862.0 296.8 V313.5 M868.8 293.0 V308.5 M874.5 293.5 V311.8 M882.0 290.0 V310.5" stroke="#222" stroke-width="1.4" fill="none"/>
<path d="M8.5 365.2 H10.5 M10.5 368.2 H12.5 M15.5 358.1 H17.5 M17.5 361.4 H19.5 M21.8 355.2 H23.8 M23.8 356.8 H25.8 M28.5 352.1 H30.5 M30.5 358.9 H32.5 M35.5 341.7 H37.5 M37.5 345.3 H39.5 M42.2 334.3 H44.2 M44.2 336.7 H46.2 M49.2 333.8 H51.2 M51.2 336.2 H53.2 M55.5 332.6 H57.5 M57.5 335.4 H59.5 M61.8 336.7 H63.8 M63.8 340.3 H65.8 M68.5 334.1 H70.5 M70.5 336.4 H72.5 M75.0 332.1 H77.0 M77.0 334.4 H79.0 M81.8 332.1 H83.8 M83.8 334.4 H85.8 M88.0 334.7 H90.0 M90.0 338.3 H92.0 M95.0 330.4 H97.0 M97.0 333.1 H99.0 M101.8 331.7 H103.8 M103.8 335.3 H105.8 M108.0 330.1 H110.0 M110.0 332.9 H112.0 M115.0 328.3 H117.0 M117.0 332.7 H119.0 M121.0 330.3 H123.0 M123.0 334.7 H125.0 M128.0 327.3 H130.0 M130.0 331.7 H132.0 M135.0 337.9 H137.0 M137.0 343.1 H139.0 M141.0 347.6 H143.0 M143.0 352.4 H145.0 M148.0 344.7 H150.0 M150.0 348.3 H152.0 M154.2 347.2 H156.2 M156.2 352.8 H158.2 M161.0 350.0 H163.0 M163.0 354.0 H165.0 M167.5 343.1 H169.5 M169.5 349.4 H171.5 M174.2 331.9 H176.2 M176.2 337.1 H178.2 M181.0 326.4 H183.0 M183.0 329.6 H185.0 M187.5 325.9 H189.5 M189.5 331.1 H191.5 M194.2 325.2 H196.2 M196.2 330.8 H198.2 M200.0 334.7 H202.0 M202.0 338.3 H204.0 M207.5 330.1 H209.5 M209.5 336.9 H211.5 M213.5 336.8 H215.5 M215.5 343.2 H217.5 M220.0 337.1 H222.0 M222.0 343.4 H224.0 M226.8 339.8 H228.8 M228.8 344.8 H230.8 M233.0 344.9 H235.0 M235.0 352.6 H237.0 M240.0 369.9 H242.0 M242.0 382.6 H244.0 M246.8 394.9 H248.8 M248.8 404.1 H250.8 M253.0 383.7 H255.0 M255.0 387.3 H257.0 M260.0 383.9 H262.0 M262.0 389.1 H264.0 M266.0 398.5 H268.0 M268.0 407.2 H270.0 M273.0 404.1 H275.0 M275.0 417.4 H277.0 M280.0 405.4 H282.0 M282.0 420.1 H284.0 M286.0 430.9 H288.0 M288.0 441.6 H290.0 M293.0 451.9 H295.0 M295.0 469.4 H297.0 M299.2 466.2 H301.2 M301.2 476.2 H303.2 M306.0 477.5 H308.0 M308.0 495.8 H310.0 M313.0 461.5 H315.0 M315.0 478.5 H317.0 M319.2 434.3 H321.2 M321.2 440.7 H323.2 M326.0 427.2 H328.0 M328.0 438.5 H330.0 M331.8 396.6 H333.8 M333.8 405.4 H335.8 M338.5 385.9 H340.5 M340.5 395.4 H342.5 M345.5 393.4 H347.5 M347.5 400.6 H349.5 M351.8 398.0 H353.8 M353.8 406.0 H355.8 M358.5 409.6 H360.5 M360.5 418.9 H362.5 M365.0 408.9 H367.0 M367.0 414.1 H369.0 M371.8 414.6 H373.8 M373.8 424.9 H375.8 M378.5 414.4 H380.5 M380.5 423.6 H382.5 M385.0 394.8 H387.0 M387.0 401.8 H389.0 M391.8 390.1 H393.8 M393.8 397.4 H395.8 M398.0 405.5 H400.0 M400.0 413.5 H402.0 M405.0 401.2 H407.0 M407.0 406.8 H409.0 M411.8 392.4 H413.8 M413.8 399.6 H415.8 M418.0 382.9 H420.0 M420.0 386.1 H422.0 M425.0 381.6 H427.0 M427.0 384.9 H429.0 M431.0 374.7 H433.0 M433.0 378.3 H435.0 M438.0 368.7 H440.0 M440.0 371.6 H442.0 M445.0 363.8 H447.0 M447.0 370.8 H449.0 M451.0 364.8 H453.0 M453.0 367.8 H455.0 M457.5 365.1 H459.5 M459.5 367.9 H461.5 M463.5 352.9 H465.5 M465.5 360.1 H467.5 M470.5 349.5 H472.5 M472.5 352.2 H474.5 M478.0 348.9 H480.0 M480.0 356.6 H482.0 M483.5 321.8 H485.5 M485.5 327.5 H487.5 M490.5 327.5 H492.5 M492.5 331.8 H494.5 M497.0 331.6 H499.0 M499.0 336.4 H501.0 M504.2 339.4 H506.2 M506.2 344.1 H508.2 M511.0 355.2 H513.0 M513.0 363.2 H515.0 M517.5 372.0 H519.5 M519.5 379.0 H521.5 M524.2 375.7 H526.2 M526.2 381.0 H528.2 M530.0 359.0 H532.0 M532.0 367.7 H534.0 M536.8 351.0 H538.8 M538.8 355.7 H540.8 M543.5 345.6 H545.5 M545.5 349.9 H547.5 M550.0 359.4 H552.0 M552.0 367.9 H554.0 M556.8 375.1 H558.8 M558.8 381.4 H560.8 M563.0 382.1 H565.0 M565.0 392.6 H567.0 M570.0 387.0 H572.0 M572.0 394.0 H574.0 M575.8 412.9 H577.8 M577.8 425.6 H579.8 M582.5 431.2 H584.5 M584.5 439.1 H586.5 M589.2 429.2 H591.2 M591.2 442.2 H593.2 M596.0 422.9 H598.0 M598.0 436.6 H600.0 M603.0 391.5 H605.0 M605.0 400.2 H607.0 M609.2 379.2 H611.2 M611.2 384.2 H613.2 M616.0 377.6 H618.0 M618.0 382.1 H620.0 M623.0 365.6 H625.0 M625.0 369.9 H627.0 M629.2 367.9 H631.2 M631.2 370.6 H633.2 M635.5 364.1 H637.5 M637.5 366.4 H639.5 M641.8 364.9 H643.8 M643.8 368.1 H645.8 M648.5 367.2 H650.5 M650.5 370.2 H652.5 M655.5 373.1 H657.5 M657.5 379.9 H659.5 M661.8 380.1 H663.8 M663.8 386.4 H665.8 M668.5 399.1 H670.5 M670.5 412.2 H672.5 M675.0 417.0 H677.0 M677.0 427.3 H679.0 M681.8 414.2 H683.8 M683.8 419.8 H685.8 M688.5 386.2 H690.5 M690.5 396.5 H692.5 M695.0 379.4 H697.0 M697.0 387.9 H699.0 M701.8 393.5 H703.8 M703.8 401.5 H705.8 M708.0 392.5 H710.0 M710.0 406.8 H712.0 M715.0 427.8 H717.0 M717.0 436.9 H719.0 M721.8 411.4 H723.8 M723.8 419.9 H725.8 M728.0 410.0 H730.0 M730.0 419.7 H732.0 M735.0 400.5 H737.0 M737.0 408.8 H739.0 M741.0 394.2 H743.0 M743.0 401.8 H745.0 M748.0 377.0 H750.0 M750.0 385.3 H752.0 M755.0 380.6 H757.0 M757.0 387.9 H759.0 M761.0 390.8 H763.0 M763.0 395.8 H765.0 M768.0 394.9 H770.0 M770.0 404.6 H772.0 M774.2 401.6 H776.2 M776.2 413.9 H778.2 M781.0 409.3 H783.0 M783.0 419.7 H785.0 M788.0 400.7 H790.0 M790.0 410.3 H792.0 M794.2 400.6 H796.2 M796.2 409.9 H798.2 M801.0 374.1 H803.0 M803.0 382.9 H805.0 M806.8 370.7 H808.8 M808.8 376.0 H810.8 M813.5 351.5 H815.5 M815.5 363.5 H817.5 M820.5 344.5 H822.5 M822.5 348.2 H824.5 M826.8 345.5 H828.8 M828.8 351.5 H830.8 M833.5 342.4 H835.5 M835.5 348.1 H837.5 M840.0 340.3 H842.0 M842.0 345.0 H844.0 M847.5 319.5 H849.5 M849.5 327.5 H851.5 M854.2 306.0 H856.2 M856.2 310.0 H858.2 M860.0 301.8 H862.0 M862.0 308.5 H864.0 M866.8 297.6 H868.8 M868.8 303.9 H870.8 M872.5 299.0 H874.5 M874.5 306.3 H876.5 M880.0 296.1 H882.0 M882.0 304.4 H884.0" stroke="#1a1a1a" stroke-width="1" fill="none"/>
<path d="M10.0 385.0 C22.1 383.4 63.3 378.1 82.5 375.5 C101.7 372.9 109.6 371.3 125.0 369.5 C140.4 367.7 156.7 366.1 175.0 364.5 C193.3 362.9 219.2 360.5 235.0 360.0 C250.8 359.5 260.0 360.8 270.0 361.8 C280.0 362.7 286.7 364.2 295.0 365.5 C303.3 366.8 309.6 368.4 320.0 369.2 C330.4 370.1 346.7 370.0 357.5 370.5 C368.3 371.0 374.6 372.0 385.0 372.5 C395.4 373.0 405.8 373.4 420.0 373.5 C434.2 373.6 456.7 373.7 470.0 373.0 C483.3 372.3 492.5 370.1 500.0 369.5 C507.5 368.9 503.3 369.2 515.0 369.2 C526.7 369.3 556.7 369.2 570.0 370.0 C583.3 370.8 581.2 373.5 595.0 374.2 C608.8 375.0 636.7 373.6 652.5 374.2 C668.3 374.9 676.2 377.0 690.0 378.0 C703.8 379.0 719.2 379.6 735.0 380.5 C750.8 381.4 770.4 383.1 785.0 383.5 C799.6 383.9 810.8 383.5 822.5 383.0 C834.2 382.5 845.1 381.5 855.0 380.5 C864.9 379.5 877.5 377.4 882.0 376.8" fill="none" stroke="#5e8048" stroke-width="2.2"/>
<polyline points="10.0,463.8 17.5,445.0 23.8,450.5 30.5,443.8 37.5,422.5 43.8,409.5 51.2,411.2 57.0,395.5 63.8,408.0 70.5,393.0 76.2,391.2 83.0,377.0 89.5,388.0 96.2,378.0 103.8,391.2 110.0,378.8 116.2,365.5 122.5,368.8 130.0,385.0 137.0,401.2 143.8,401.2 150.0,390.5 156.2,406.2 162.5,410.5 169.5,393.0 176.2,393.0 187.5,398.8 196.2,414.5 201.2,415.5 208.8,428.8 216.2,433.0 221.2,429.5 228.8,436.2 235.0,420.5 241.2,432.5 248.8,446.2 255.0,443.0 267.5,467.0 275.0,445.0 287.5,486.2 295.0,496.2 307.5,482.0 314.5,501.2 321.2,476.2 327.5,474.5 334.5,452.5 341.2,452.0 353.8,413.8 360.5,427.5 367.5,406.2 373.8,432.0 387.0,376.2 394.5,397.5 405.0,366.2 407.5,364.5 413.0,363.5 432.5,310.5 439.5,314.2 447.0,336.0 452.5,322.5 458.8,333.5 465.0,331.0 472.5,354.2 480.0,351.8 491.2,354.2 506.2,364.5 512.5,362.0 517.5,386.2 526.2,392.5 532.0,371.2 536.2,375.0 545.0,392.5 552.5,419.5 558.8,437.5 564.5,459.5 571.2,440.5 577.5,465.0 592.0,494.5 598.0,475.5 605.0,470.0 611.2,431.2 617.5,413.8 625.0,417.0 631.2,426.2 637.5,422.0 643.8,433.0 650.0,433.0 657.5,426.2 665.0,452.5 676.2,487.0 690.0,440.0 697.5,443.8 703.0,443.0 709.5,470.0 722.5,460.0 729.5,434.5 737.5,446.2 748.8,460.0 762.5,455.5 768.8,462.5 775.5,475.5 783.0,457.5 789.5,470.0 802.5,420.5 808.8,415.0 815.5,386.2 828.8,405.5 849.5,331.8 861.2,290.0 866.2,290.0 872.0,301.8 874.5,316.0 881.2,313.5" fill="none" stroke="#5a8046" stroke-width="2.0" stroke-linejoin="round"/>
<polyline points="10.0,599.5 23.8,568.8 30.5,583.8 37.5,568.0 43.8,562.0 51.2,553.0 58.0,558.0 63.8,582.5 71.2,571.2 78.0,588.0 87.5,595.0 90.0,595.5 96.2,587.0 103.0,582.5 110.0,593.8 117.0,598.8 122.5,583.0 130.0,590.0 137.0,611.2 143.0,593.0 149.5,595.5 156.2,611.2 162.5,608.0 169.5,595.5 182.5,579.5 201.2,632.0 208.0,618.8 215.5,633.8 222.0,620.0 228.0,627.0 234.5,625.5 242.5,640.0 248.8,649.5 255.0,624.5 261.2,624.5 268.0,638.8 275.0,615.5 282.0,630.0 288.8,637.0 295.0,648.8 301.2,629.5 307.5,629.5 315.0,618.8 320.5,596.2 327.5,596.2 334.5,576.2 341.2,585.0 353.8,563.0 361.2,568.0 367.0,554.5 373.8,570.0 387.5,550.5 393.8,563.0 400.5,562.5 413.8,545.5 420.0,550.5 426.2,551.2 433.0,574.5 440.0,568.8 446.2,573.8 453.0,592.0 459.5,592.0 465.5,582.0 473.0,596.2 479.5,602.5 486.2,593.0 492.5,593.0 499.5,602.5 505.5,593.8 512.5,598.8 518.8,620.5 525.5,608.0 532.0,595.5 538.8,602.5 545.5,593.0 552.5,610.5 558.8,614.5 565.0,632.0 572.0,615.5 578.0,632.0 584.5,628.8 592.0,629.5 598.8,606.2 605.0,590.0 610.0,586.2 617.5,570.5 625.0,565.5 631.2,566.2 638.0,581.2 643.8,582.0 651.2,590.5 657.5,611.2 663.8,615.0 670.5,631.2 677.0,640.0 690.5,602.0 697.5,621.2 705.0,637.0 711.2,643.8 717.5,645.0 723.8,648.8 749.5,588.0 756.2,596.2 762.5,590.0 775.0,618.8 782.0,609.5 789.5,622.5 802.5,585.0 808.8,597.0 815.5,578.8 828.8,594.5 836.2,581.2 842.0,587.0 851.2,566.2 857.0,559.5 862.0,558.0 868.0,550.5 875.0,562.0 882.0,550.0" fill="none" stroke="#587e44" stroke-width="2" stroke-linejoin="round"/>
<rect x="26.2" y="547.0" width="48.2" height="16.0" fill="#ffff00" style="mix-blend-mode:multiply"/>
<rect x="365.5" y="545.5" width="75.8" height="15.0" fill="#ffff00" style="mix-blend-mode:multiply"/>
<rect x="850.0" y="545.5" width="55.5" height="16.5" fill="#ffff00" style="mix-blend-mode:multiply"/>
<polyline points="836.5,212.4 837.6,205.3 842.4,193.5 844.7,184.1 848.2,170.0 852.9,160.6 861.2,151.2 870.6,140.6" fill="none" stroke="#2ae42a" stroke-width="3.8" stroke-linejoin="round" stroke-linecap="round"/>
<polyline points="861.2,142.2 872.5,136.6 880.0,157.8" fill="none" stroke="#2ae42a" stroke-width="3.8" stroke-linejoin="round" stroke-linecap="round"/>
<polyline points="63.8,322.5 100.0,315.5 145.0,309.2 175.0,309.2 197.5,306.0 206.0,305.0" fill="none" stroke="#2ae42a" stroke-width="3.8" stroke-linejoin="round" stroke-linecap="round"/>
<polyline points="191.0,300.5 206.0,300.5 205.0,329.0" fill="none" stroke="#2ae42a" stroke-width="3.8" stroke-linejoin="round" stroke-linecap="round"/>
<polyline points="420.0,370.5 430.0,360.5 442.5,352.5 451.2,343.0 457.5,334.2 471.2,320.5 478.8,305.5 486.2,297.5" fill="none" stroke="#2ae42a" stroke-width="3.8" stroke-linejoin="round" stroke-linecap="round"/>
<polyline points="475.0,297.5 488.8,295.5 493.8,305.5" fill="none" stroke="#2ae42a" stroke-width="3.8" stroke-linejoin="round" stroke-linecap="round"/>
<polyline points="833.8,461.2 837.5,450.0 842.5,432.5 843.0,420.0 847.5,405.0 852.5,392.5 858.8,382.5 867.5,367.5 875.0,348.0 880.0,338.0" fill="none" stroke="#2ae42a" stroke-width="3.8" stroke-linejoin="round" stroke-linecap="round"/>
<polyline points="867.5,341.8 878.8,335.5 885.0,356.8" fill="none" stroke="#2ae42a" stroke-width="3.8" stroke-linejoin="round" stroke-linecap="round"/>
<polyline points="77.5,546.2 90.0,550.0 105.0,558.8 120.0,565.0 135.0,571.2 150.0,574.5" fill="none" stroke="#2ae42a" stroke-width="3.8" stroke-linejoin="round" stroke-linecap="round"/>
<polyline points="145.0,553.8 151.2,575.0 136.2,575.0" fill="none" stroke="#2ae42a" stroke-width="3.8" stroke-linejoin="round" stroke-linecap="round"/>
<polyline points="411.2,537.0 420.0,541.2 435.0,545.0 445.0,548.8 460.0,557.5 470.0,566.2 485.0,576.2 497.5,583.8" fill="none" stroke="#2ae42a" stroke-width="3.8" stroke-linejoin="round" stroke-linecap="round"/>
<polyline points="485.0,583.8 497.5,585.5 500.0,573.8" fill="none" stroke="#2ae42a" stroke-width="3.8" stroke-linejoin="round" stroke-linecap="round"/>
<polyline points="821.2,625.5 828.8,622.5 837.5,612.5 845.0,607.5 853.8,605.0 865.0,597.5 877.5,588.8 885.0,583.8" fill="none" stroke="#2ae42a" stroke-width="3.8" stroke-linejoin="round" stroke-linecap="round"/>
<polyline points="868.8,583.8 887.0,582.5 887.0,592.5" fill="none" stroke="#2ae42a" stroke-width="3.8" stroke-linejoin="round" stroke-linecap="round"/>
<circle cx="879.5" cy="226.5" r="1.6" fill="#2ae42a"/>
</g>
<g clip-path="url(#cpd)">
<rect x="9" y="660" width="949" height="33" fill="#c4c4c4"/>
<rect x="958" y="660" width="50" height="33" fill="#ececec"/>
<rect x="957" y="660" width="1" height="33" fill="#a0a0a0"/>
<rect x="9" y="660" width="947" height="2" fill="#2e2e2e"/>
<rect x="9" y="676" width="947" height="2" fill="#2e2e2e"/>
<rect x="9" y="678" width="947" height="1" fill="#dadada"/>
<rect x="9" y="690" width="949" height="1" fill="#b4b4b4"/><rect x="9" y="691" width="949" height="1" fill="#8a8a8a"/><rect x="9" y="692" width="949" height="1" fill="#444"/>
<rect x="4.2" y="660" width="2" height="17" fill="#2e2e2e"/>
<text x="7.2" y="673.3" font-size="12" fill="#111">11</text>
<rect x="37.1" y="660" width="2" height="17" fill="#2e2e2e"/>
<text x="40.1" y="673.3" font-size="12" fill="#111">18</text>
<rect x="70.0" y="660" width="2" height="17" fill="#2e2e2e"/>
<text x="73.0" y="673.3" font-size="12" fill="#111">25</text>
<rect x="103.0" y="660" width="2" height="17" fill="#2e2e2e"/>
<text x="106.0" y="673.3" font-size="12" fill="#111">2</text>
<rect x="129.0" y="660" width="2" height="17" fill="#2e2e2e"/>
<text x="132.0" y="673.3" font-size="12" fill="#111">8</text>
<rect x="161.8" y="660" width="2" height="17" fill="#2e2e2e"/>
<text x="164.8" y="673.3" font-size="12" fill="#111">15</text>
<rect x="194.8" y="660" width="2" height="17" fill="#2e2e2e"/>
<text x="197.8" y="673.3" font-size="12" fill="#111">22</text>
<rect x="227.7" y="660" width="2" height="17" fill="#2e2e2e"/>
<text x="230.7" y="673.3" font-size="12" fill="#111">29</text>
<rect x="260.8" y="660" width="2" height="17" fill="#2e2e2e"/>
<text x="263.8" y="673.3" font-size="12" fill="#111">6</text>
<rect x="293.7" y="660" width="2" height="17" fill="#2e2e2e"/>
<text x="296.7" y="673.3" font-size="12" fill="#111">13</text>
<rect x="326.6" y="660" width="2" height="17" fill="#2e2e2e"/>
<text x="329.6" y="673.3" font-size="12" fill="#111">20</text>
<rect x="359.6" y="660" width="2" height="17" fill="#2e2e2e"/>
<text x="362.6" y="673.3" font-size="12" fill="#111">27</text>
<rect x="392.5" y="660" width="2" height="17" fill="#2e2e2e"/>
<text x="395.5" y="673.3" font-size="12" fill="#111">3</text>
<rect x="425.5" y="660" width="2" height="17" fill="#2e2e2e"/>
<text x="428.5" y="673.3" font-size="12" fill="#111">10</text>
<rect x="458.4" y="660" width="2" height="17" fill="#2e2e2e"/>
<text x="461.4" y="673.3" font-size="12" fill="#111">17</text>
<rect x="491.9" y="660" width="2" height="17" fill="#2e2e2e"/>
<text x="494.9" y="673.3" font-size="12" fill="#111">24</text>
<rect x="517.8" y="660" width="2" height="17" fill="#2e2e2e"/>
<text x="520.8" y="673.3" font-size="12" fill="#111">1</text>
<rect x="550.8" y="660" width="2" height="17" fill="#2e2e2e"/>
<text x="553.8" y="673.3" font-size="12" fill="#111">8</text>
<rect x="583.7" y="660" width="2" height="17" fill="#2e2e2e"/>
<text x="586.7" y="673.3" font-size="12" fill="#111">15</text>
<rect x="617.0" y="660" width="2" height="17" fill="#2e2e2e"/>
<text x="620.0" y="673.3" font-size="12" fill="#111">22</text>
<rect x="643.0" y="660" width="2" height="17" fill="#2e2e2e"/>
<text x="646.0" y="673.3" font-size="12" fill="#111">29</text>
<rect x="670.3" y="660" width="2" height="17" fill="#2e2e2e"/>
<text x="673.3" y="673.3" font-size="12" fill="#111">5</text>
<rect x="702.8" y="660" width="2" height="17" fill="#2e2e2e"/>
<text x="705.8" y="673.3" font-size="12" fill="#111">12</text>
<rect x="736.1" y="660" width="2" height="17" fill="#2e2e2e"/>
<text x="739.1" y="673.3" font-size="12" fill="#111">20</text>
<rect x="761.0" y="660" width="2" height="17" fill="#2e2e2e"/>
<text x="764.0" y="673.3" font-size="12" fill="#111">26</text>
<rect x="794.9" y="660" width="2" height="17" fill="#2e2e2e"/>
<text x="797.9" y="673.3" font-size="12" fill="#111">2</text>
<rect x="828.0" y="660" width="2" height="17" fill="#2e2e2e"/>
<text x="831.0" y="673.3" font-size="12" fill="#111">9</text>
<rect x="861.0" y="660" width="2" height="17" fill="#2e2e2e"/>
<text x="864.0" y="673.3" font-size="12" fill="#111">17</text>
<rect x="888.0" y="660" width="2" height="17" fill="#2e2e2e"/>
<text x="891.0" y="673.3" font-size="12" fill="#111">23</text>
<rect x="920.6" y="660" width="2" height="17" fill="#2e2e2e"/>
<text x="923.6" y="673.3" font-size="12" fill="#111">2</text>
<rect x="954" y="660" width="2" height="17" fill="#2e2e2e"/>
<rect x="663" y="660" width="2" height="17" fill="#2e2e2e"/>
<rect x="103.0" y="676" width="2" height="17" fill="#2e2e2e"/>
<text x="106.0" y="689.3" font-size="12" fill="#111" letter-spacing="0.35">September</text>
<rect x="240.8" y="676" width="2" height="17" fill="#2e2e2e"/>
<text x="243.8" y="689.3" font-size="12" fill="#111" letter-spacing="0.35">October</text>
<rect x="392.5" y="676" width="2" height="17" fill="#2e2e2e"/>
<text x="395.5" y="689.3" font-size="12" fill="#111" letter-spacing="0.35">November</text>
<rect x="517.8" y="676" width="2" height="17" fill="#2e2e2e"/>
<text x="520.8" y="689.3" font-size="12" fill="#111" letter-spacing="0.35">December</text>
<rect x="663.0" y="676" width="2" height="17" fill="#2e2e2e"/>
<text x="666.0" y="689.3" font-size="12" fill="#111" letter-spacing="0.35">2015</text>
<rect x="794.9" y="676" width="2" height="17" fill="#2e2e2e"/>
<text x="797.9" y="689.3" font-size="12" fill="#111" letter-spacing="0.35">February</text>
<rect x="920.6" y="676" width="2" height="17" fill="#2e2e2e"/>
<text x="923.6" y="689.3" font-size="12" fill="#111" letter-spacing="0.35">March</text>
</g>
<rect x="8" y="8" width="1" height="687" fill="#000"/>
</svg></body></html>
